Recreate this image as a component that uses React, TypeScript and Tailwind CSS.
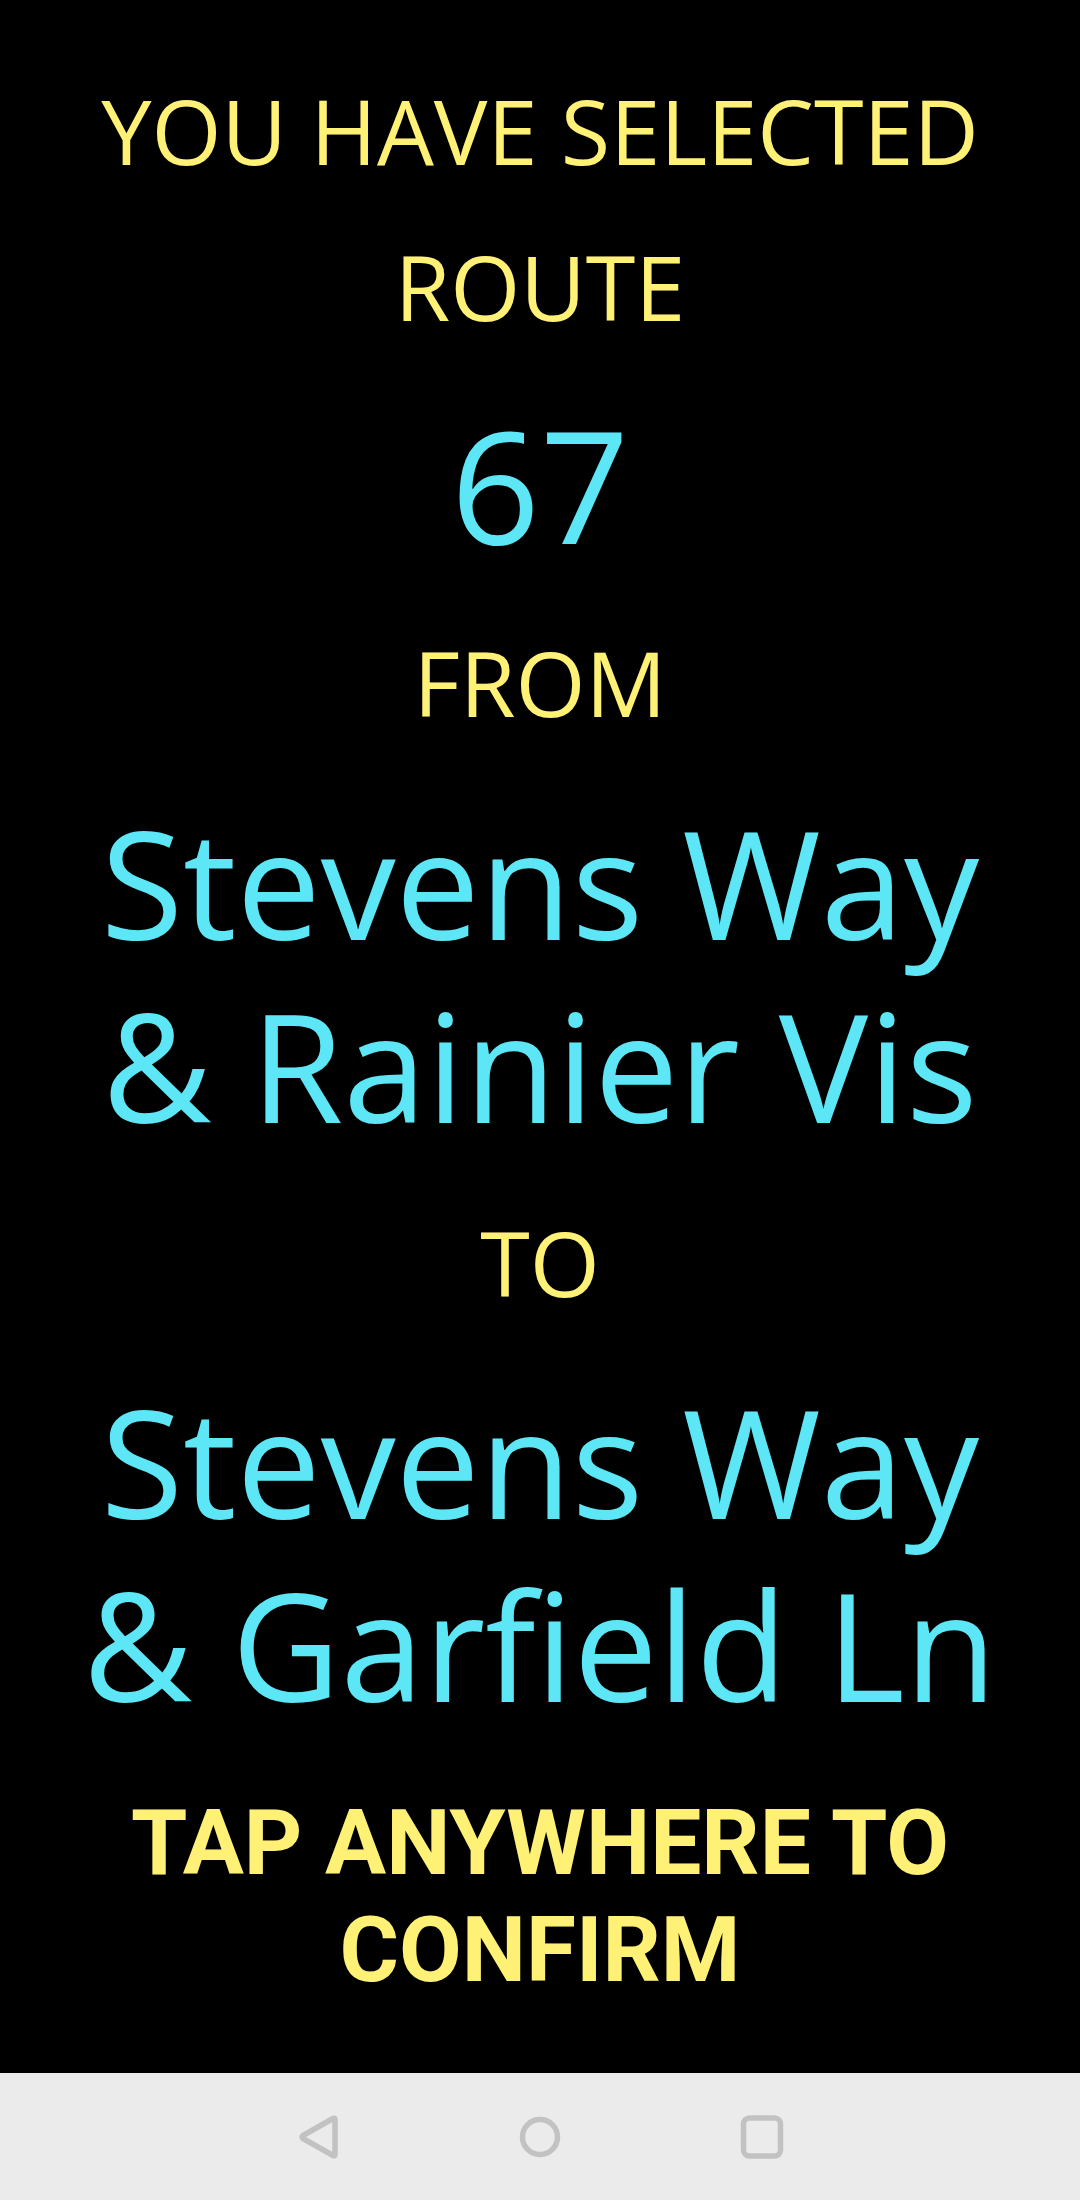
import React from "react";

const Y = "text-[#fff176]";
const C = "text-[#5ce6f6]";

export default function App() {
  return (
    <div className="w-[1080px] h-[2200px] bg-black flex flex-col overflow-hidden">
      <main className="h-[2073px] flex flex-col items-center pt-[70px] text-center font-['Open_Sans',sans-serif] font-normal whitespace-nowrap">
        <div className={`${Y} text-[90px] leading-[120px]`}>YOU HAVE SELECTED</div>
        <div className={`${Y} text-[90px] leading-[120px] mt-[36px]`}>ROUTE</div>
        <div className={`${C} text-[156px] leading-[180px] mt-[48px]`}>67</div>
        <div className={`${Y} text-[90px] leading-[120px] mt-[48px]`}>FROM</div>
        <div className={`${C} text-[150px] leading-[183px] mt-[49px]`}>
          Stevens Way
          <br />
          &amp; Rainier Vis
        </div>
        <div className={`${Y} text-[90px] leading-[120px] mt-[45px]`}>TO</div>
        <div className={`${C} text-[150px] leading-[183px] mt-[48px]`}>
          Stevens Way
          <br />
          &amp; Garfield Ln
        </div>
        <div className={`${Y} font-['Roboto',sans-serif] font-bold text-[91px] leading-[107px] mt-[54px]`}>
          TAP ANYWHERE TO
          <br />
          CONFIRM
        </div>
      </main>
      <nav className="h-[127px] bg-[#ebebeb] flex items-center justify-center gap-[178px]">
        <svg width="44" height="44" viewBox="0 0 44 44" fill="none">
          <path
            d="M39 4.5 L39 39.5 Q39 41.5 37 40.5 L7 23.5 Q5 22 7 20.5 L37 3.5 Q39 2.5 39 4.5 Z"
            stroke="#c2c2c2"
            strokeWidth="5.5"
            strokeLinejoin="round"
          />
        </svg>
        <svg width="44" height="44" viewBox="0 0 44 44" fill="none">
          <circle cx="22" cy="22" r="17.5" stroke="#c2c2c2" strokeWidth="5.5" />
        </svg>
        <svg width="44" height="44" viewBox="0 0 44 44" fill="none">
          <rect x="3.5" y="3" width="37" height="38" rx="6" stroke="#c2c2c2" strokeWidth="5.5" />
        </svg>
      </nav>
    </div>
  );
}
